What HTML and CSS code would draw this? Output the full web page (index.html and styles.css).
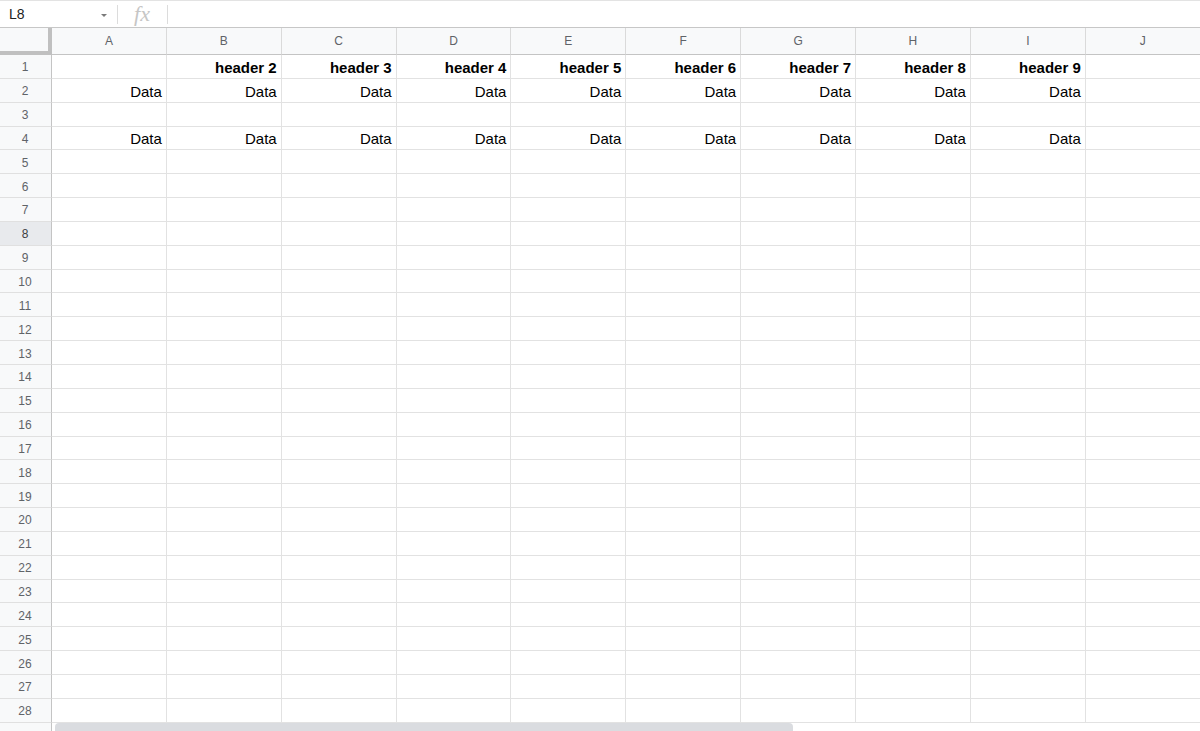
FILE: index.html
```html
<!DOCTYPE html>
<html>
<head>
<meta charset="utf-8">
<link rel="stylesheet" href="styles.css">
</head>
<body>
<div class="app">
  <div class="fbar">
    <div class="namebox"><span class="nb-text">L8</span><span class="caret"></span></div>
    <div class="sep"></div>
    <div class="fx">fx</div>
    <div class="sep"></div>
  </div>
  <div class="grid">
    <div class="r hdr"><div class="rh corner"></div><div class="ch">A</div><div class="ch">B</div><div class="ch">C</div><div class="ch">D</div><div class="ch">E</div><div class="ch">F</div><div class="ch">G</div><div class="ch">H</div><div class="ch">I</div><div class="ch">J</div></div>
    <div class="r"><div class="rh">1</div><div class="c"></div><div class="c b">header 2</div><div class="c b">header 3</div><div class="c b">header 4</div><div class="c b">header 5</div><div class="c b">header 6</div><div class="c b">header 7</div><div class="c b">header 8</div><div class="c b">header 9</div><div class="c"></div></div>
    <div class="r"><div class="rh">2</div><div class="c">Data</div><div class="c">Data</div><div class="c">Data</div><div class="c">Data</div><div class="c">Data</div><div class="c">Data</div><div class="c">Data</div><div class="c">Data</div><div class="c">Data</div><div class="c"></div></div>
    <div class="r"><div class="rh">3</div><div class="c"></div><div class="c"></div><div class="c"></div><div class="c"></div><div class="c"></div><div class="c"></div><div class="c"></div><div class="c"></div><div class="c"></div><div class="c"></div></div>
    <div class="r"><div class="rh">4</div><div class="c">Data</div><div class="c">Data</div><div class="c">Data</div><div class="c">Data</div><div class="c">Data</div><div class="c">Data</div><div class="c">Data</div><div class="c">Data</div><div class="c">Data</div><div class="c"></div></div>
    <div class="r"><div class="rh">5</div><div class="c"></div><div class="c"></div><div class="c"></div><div class="c"></div><div class="c"></div><div class="c"></div><div class="c"></div><div class="c"></div><div class="c"></div><div class="c"></div></div>
    <div class="r"><div class="rh">6</div><div class="c"></div><div class="c"></div><div class="c"></div><div class="c"></div><div class="c"></div><div class="c"></div><div class="c"></div><div class="c"></div><div class="c"></div><div class="c"></div></div>
    <div class="r"><div class="rh">7</div><div class="c"></div><div class="c"></div><div class="c"></div><div class="c"></div><div class="c"></div><div class="c"></div><div class="c"></div><div class="c"></div><div class="c"></div><div class="c"></div></div>
    <div class="r"><div class="rh sel">8</div><div class="c"></div><div class="c"></div><div class="c"></div><div class="c"></div><div class="c"></div><div class="c"></div><div class="c"></div><div class="c"></div><div class="c"></div><div class="c"></div></div>
    <div class="r"><div class="rh">9</div><div class="c"></div><div class="c"></div><div class="c"></div><div class="c"></div><div class="c"></div><div class="c"></div><div class="c"></div><div class="c"></div><div class="c"></div><div class="c"></div></div>
    <div class="r"><div class="rh">10</div><div class="c"></div><div class="c"></div><div class="c"></div><div class="c"></div><div class="c"></div><div class="c"></div><div class="c"></div><div class="c"></div><div class="c"></div><div class="c"></div></div>
    <div class="r"><div class="rh">11</div><div class="c"></div><div class="c"></div><div class="c"></div><div class="c"></div><div class="c"></div><div class="c"></div><div class="c"></div><div class="c"></div><div class="c"></div><div class="c"></div></div>
    <div class="r"><div class="rh">12</div><div class="c"></div><div class="c"></div><div class="c"></div><div class="c"></div><div class="c"></div><div class="c"></div><div class="c"></div><div class="c"></div><div class="c"></div><div class="c"></div></div>
    <div class="r"><div class="rh">13</div><div class="c"></div><div class="c"></div><div class="c"></div><div class="c"></div><div class="c"></div><div class="c"></div><div class="c"></div><div class="c"></div><div class="c"></div><div class="c"></div></div>
    <div class="r"><div class="rh">14</div><div class="c"></div><div class="c"></div><div class="c"></div><div class="c"></div><div class="c"></div><div class="c"></div><div class="c"></div><div class="c"></div><div class="c"></div><div class="c"></div></div>
    <div class="r"><div class="rh">15</div><div class="c"></div><div class="c"></div><div class="c"></div><div class="c"></div><div class="c"></div><div class="c"></div><div class="c"></div><div class="c"></div><div class="c"></div><div class="c"></div></div>
    <div class="r"><div class="rh">16</div><div class="c"></div><div class="c"></div><div class="c"></div><div class="c"></div><div class="c"></div><div class="c"></div><div class="c"></div><div class="c"></div><div class="c"></div><div class="c"></div></div>
    <div class="r"><div class="rh">17</div><div class="c"></div><div class="c"></div><div class="c"></div><div class="c"></div><div class="c"></div><div class="c"></div><div class="c"></div><div class="c"></div><div class="c"></div><div class="c"></div></div>
    <div class="r"><div class="rh">18</div><div class="c"></div><div class="c"></div><div class="c"></div><div class="c"></div><div class="c"></div><div class="c"></div><div class="c"></div><div class="c"></div><div class="c"></div><div class="c"></div></div>
    <div class="r"><div class="rh">19</div><div class="c"></div><div class="c"></div><div class="c"></div><div class="c"></div><div class="c"></div><div class="c"></div><div class="c"></div><div class="c"></div><div class="c"></div><div class="c"></div></div>
    <div class="r"><div class="rh">20</div><div class="c"></div><div class="c"></div><div class="c"></div><div class="c"></div><div class="c"></div><div class="c"></div><div class="c"></div><div class="c"></div><div class="c"></div><div class="c"></div></div>
    <div class="r"><div class="rh">21</div><div class="c"></div><div class="c"></div><div class="c"></div><div class="c"></div><div class="c"></div><div class="c"></div><div class="c"></div><div class="c"></div><div class="c"></div><div class="c"></div></div>
    <div class="r"><div class="rh">22</div><div class="c"></div><div class="c"></div><div class="c"></div><div class="c"></div><div class="c"></div><div class="c"></div><div class="c"></div><div class="c"></div><div class="c"></div><div class="c"></div></div>
    <div class="r"><div class="rh">23</div><div class="c"></div><div class="c"></div><div class="c"></div><div class="c"></div><div class="c"></div><div class="c"></div><div class="c"></div><div class="c"></div><div class="c"></div><div class="c"></div></div>
    <div class="r"><div class="rh">24</div><div class="c"></div><div class="c"></div><div class="c"></div><div class="c"></div><div class="c"></div><div class="c"></div><div class="c"></div><div class="c"></div><div class="c"></div><div class="c"></div></div>
    <div class="r"><div class="rh">25</div><div class="c"></div><div class="c"></div><div class="c"></div><div class="c"></div><div class="c"></div><div class="c"></div><div class="c"></div><div class="c"></div><div class="c"></div><div class="c"></div></div>
    <div class="r"><div class="rh">26</div><div class="c"></div><div class="c"></div><div class="c"></div><div class="c"></div><div class="c"></div><div class="c"></div><div class="c"></div><div class="c"></div><div class="c"></div><div class="c"></div></div>
    <div class="r"><div class="rh">27</div><div class="c"></div><div class="c"></div><div class="c"></div><div class="c"></div><div class="c"></div><div class="c"></div><div class="c"></div><div class="c"></div><div class="c"></div><div class="c"></div></div>
    <div class="r"><div class="rh">28</div><div class="c"></div><div class="c"></div><div class="c"></div><div class="c"></div><div class="c"></div><div class="c"></div><div class="c"></div><div class="c"></div><div class="c"></div><div class="c"></div></div>
  </div>
  <div class="hscroll"><div class="hs-corner"></div><div class="thumb"></div></div>
</div>
</body>
</html>
```

FILE: styles.css
```css
* { box-sizing: border-box; }
html, body {
  margin: 0;
  padding: 0;
  background: #ffffff;
}
body {
  font-family: "Liberation Sans", Arial, sans-serif;
  color: #000;
  overflow: hidden;
}
.app {
  width: 1200px;
  height: 731px;
  overflow: hidden;
  display: flex;
  flex-direction: column;
}
.fbar {
  height: 28px;
  flex-shrink: 0;
  display: flex;
  align-items: center;
  border-top: 1px solid #e3e3e3;
  border-bottom: 1px solid #c7c7c7;
  background: #fff;
}
.namebox {
  width: 117px;
  display: flex;
  align-items: center;
  justify-content: space-between;
  padding: 0 10px 0 9px;
}
.nb-text {
  font-size: 14px;
  color: #222;
}
.caret {
  width: 0;
  height: 0;
  border-left: 3px solid transparent;
  border-right: 3px solid transparent;
  border-top: 3px solid #7a7a7a;
  margin-top: 2px;
}
.sep {
  width: 1px;
  height: 19px;
  background: #dcdcdc;
}
.fx {
  width: 49px;
  text-align: center;
  font-family: "Liberation Serif", "Times New Roman", serif;
  font-style: italic;
  font-size: 22px;
  color: #c6c6c6;
  line-height: 1;
  padding-right: 1px;
}
.grid {
  display: flex;
  flex-direction: column;
  flex-shrink: 0;
}
.r {
  display: flex;
  height: 23.85px;
  flex-shrink: 0;
}
.r.hdr {
  height: 27px;
}
.rh {
  width: 52px;
  flex-shrink: 0;
  background: #f8f9fa;
  border-right: 1px solid #c4c4c4;
  border-bottom: 1px solid #e0e0e0;
  font-size: 12px;
  color: #5f6368;
  display: flex;
  align-items: center;
  justify-content: center;
  padding: 2px 1px 0 0;
}
.rh.sel {
  background: #e8eaed;
  color: #3c4043;
}
.rh.corner {
  background: #f8f9fa;
  border-right: 4px solid #c0c0c0;
  border-bottom: 4px solid #c0c0c0;
  padding: 0;
}
.ch {
  width: 114.87px;
  flex-shrink: 0;
  background: #f8f9fa;
  border-right: 1px solid #dadada;
  border-bottom: 1px solid #c4c4c4;
  font-size: 12px;
  color: #5f6368;
  display: flex;
  align-items: center;
  justify-content: center;
}
.c {
  width: 114.87px;
  flex-shrink: 0;
  border-right: 1px solid #e2e2e2;
  border-bottom: 1px solid #e2e2e2;
  font-size: 15px;
  text-align: right;
  padding: 2px 4px 0 2px;
  display: flex;
  align-items: center;
  justify-content: flex-end;
  white-space: nowrap;
  overflow: hidden;
}
.c.b {
  font-weight: bold;
}
.hscroll {
  flex: 1;
  display: flex;
  align-items: flex-end;
  background: #fff;
}
.hs-corner {
  width: 52px;
  height: 100%;
  background: #f8f9fa;
  border-right: 1px solid #c4c4c4;
}
.thumb {
  margin-left: 3px;
  width: 738px;
  height: 8px;
  background: #dadce0;
  border-radius: 4px 4px 0 0;
}
```
